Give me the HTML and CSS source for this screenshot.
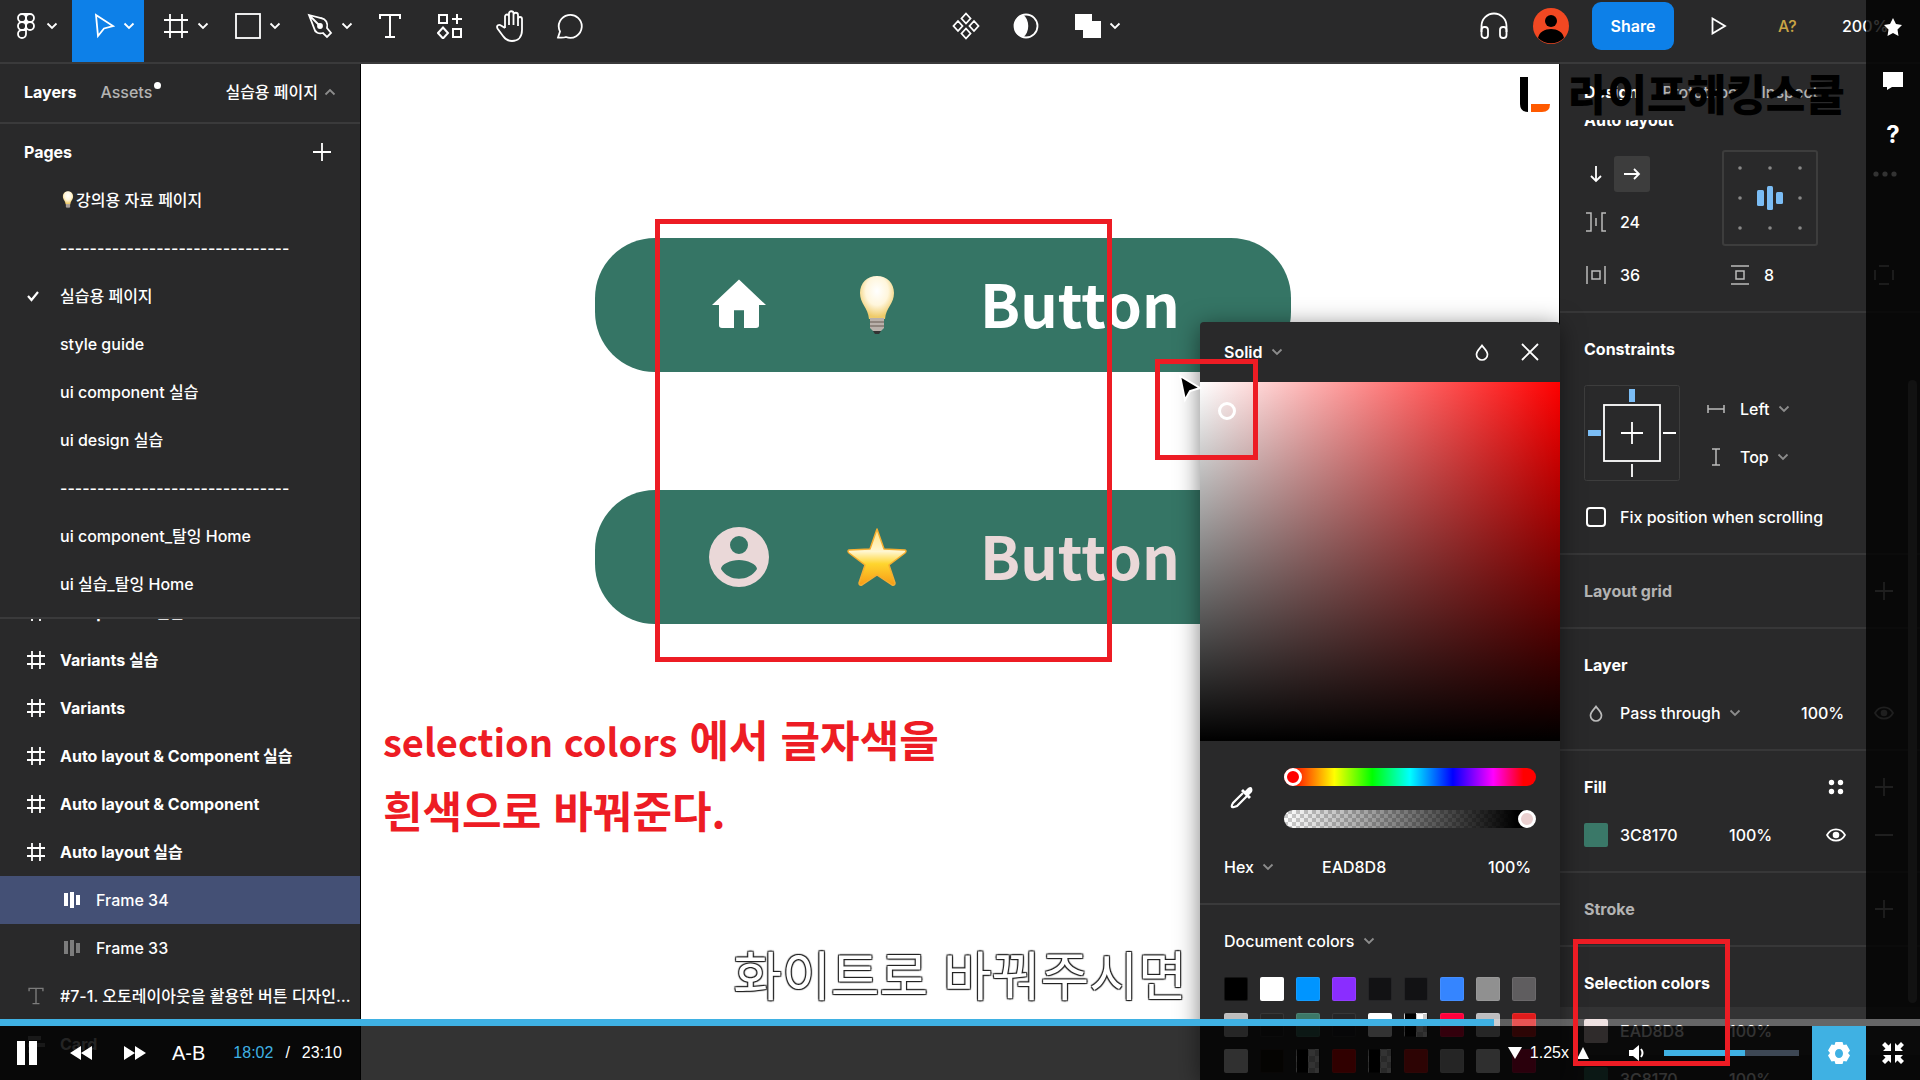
FILE: index.html
```html
<!DOCTYPE html>
<html lang="ko">
<head>
    <meta charset="UTF-8">
    <meta name="viewport" content="width=device-width, initial-scale=1.0">
    <title>라이프해킹스쿨</title>
    <link rel="stylesheet" href="styles.css">
</head>
<body>
    <!-- shared icons -->
    <svg class="sprite" aria-hidden="true">
        <symbol id="chevron" viewBox="0 0 12 8"><path d="M1.5 1.5L6 6l4.500-4.500" fill="none" stroke="currentColor" stroke-width="1.800"/></symbol>
        <symbol id="plus" viewBox="0 0 18 18"><path d="M9 0v18M0 9h18" stroke="currentColor" stroke-width="1.800"/></symbol>
        <symbol id="frame" viewBox="0 0 18 18"><path d="M5 0v18M13 0v18M0 5h18M0 13h18" stroke="currentColor" stroke-width="1.800"/></symbol>
        <symbol id="bars" viewBox="0 0 16 16"><path d="M0 1h4v13H0zM6 0h4v16H6zM12 3h4v10h-4z" fill="currentColor"/></symbol>
        <symbol id="text" viewBox="0 0 24 26"><path d="M2 6V2h20v4M12 2v22M7 24h10" fill="none" stroke="currentColor" stroke-width="2"/></symbol>
        <symbol id="drop" viewBox="0 0 14 17"><path d="M7 1.500C9 4.500 12.500 7 12.500 10.500a5.500 5.500 0 0 1-11 0C1.500 7 5 4.500 7 1.500z" fill="none" stroke="currentColor" stroke-width="1.700"/></symbol>
        <symbol id="eye" viewBox="0 0 20 14"><path d="M1 7c4-7.500 14-7.500 18 0-4 7.500-14 7.500-18 0z" fill="none" stroke="currentColor" stroke-width="1.700"/><circle cx="10" cy="7" r="3.300" fill="currentColor"/></symbol>
        <symbol id="bulb" viewBox="0 0 36 60">
            <radialGradient id="glass" cx=".5" cy=".35" r=".6"><stop offset="0" stop-color="#fff"/><stop offset=".55" stop-color="#fff6dc"/><stop offset="1" stop-color="#efcb6a"/></radialGradient>
            <path d="M18 1c10 0 17 7 17 17 0 11-8 14-9 26H10C9 32 1 29 1 18 1 8 8 1 18 1z" fill="url(#glass)"/>
            <path d="M11 43h14v10l-3 3h-8l-3-3z" fill="#b9b0aa"/><path d="M11 47h14M11 51h14" stroke="#81766f" stroke-width="1.500"/><path d="M14 56h8l-2 3h-4z" fill="#333"/>
        </symbol>
    </svg>

    <div class="app">
        <header class="toolbar">
            <div class="tools">
                <button class="tool wide menu" aria-label="Menu">
                    <svg width="20" height="26" viewBox="0 0 20 26" fill="none" stroke="currentColor" stroke-width="1.800"><rect x="2" y="1" width="8" height="8" rx="4"/><rect x="10" y="1" width="8" height="8" rx="4"/><rect x="2" y="9" width="8" height="8" rx="4"/><circle cx="14" cy="13" r="4"/><path d="M10 1v20a4 4 0 1 1-4-4h4M6 1h8M6 9h8"/></svg>
                    <svg class="chev"><use href="#chevron"/></svg>
                </button>
                <button class="tool wide active" aria-label="Move">
                    <svg width="22" height="26" viewBox="0 0 22 26" fill="none" stroke="currentColor" stroke-width="1.800"><path d="M3 2l17 11-9 2.500L5 23z"/></svg>
                    <svg class="chev"><use href="#chevron"/></svg>
                </button>
                <button class="tool wide" aria-label="Frame">
                    <svg width="26" height="26" viewBox="0 0 26 26" stroke="currentColor" stroke-width="1.800"><path d="M7 1v24M19 1v24M1 7h24M1 19h24"/></svg>
                    <svg class="chev"><use href="#chevron"/></svg>
                </button>
                <button class="tool wide" aria-label="Rectangle">
                    <svg width="26" height="26" viewBox="0 0 26 26" fill="none" stroke="currentColor" stroke-width="1.800"><rect x="1" y="1" width="24" height="24"/></svg>
                    <svg class="chev"><use href="#chevron"/></svg>
                </button>
                <button class="tool wide" aria-label="Pen">
                    <svg width="26" height="26" viewBox="0 0 26 26" fill="none" stroke="currentColor" stroke-width="1.800"><path d="M2 2l12 3c5 1 7 5 6 10l4 5-4 4-4-4c-4 1-8 0-9-5zM2 2l10 10"/><circle cx="13" cy="13" r="2" fill="currentColor"/></svg>
                    <svg class="chev"><use href="#chevron"/></svg>
                </button>
                <button class="tool" aria-label="Text"><svg width="24" height="26"><use href="#text"/></svg></button>
                <button class="tool" aria-label="Resources">
                    <svg width="26" height="26" viewBox="0 0 26 26" fill="none" stroke="currentColor" stroke-width="2"><rect x="2" y="2" width="8" height="8"/><rect x="16" y="16" width="8" height="8"/><path d="M20 1v10M15 6h10M6 14.500L11 20l-5 5.500L1 20z"/></svg>
                </button>
                <button class="tool" aria-label="Hand">
                    <svg width="28" height="32" viewBox="0 0 28 32" fill="none" stroke="currentColor" stroke-width="1.800"><path d="M9 18V6.500a2 2 0 0 1 4 0V15 3.500a2 2 0 0 1 4.500 0V15 5a2 2 0 0 1 4.500 0v11-7a2 2 0 0 1 4 0v11c0 7-4 11-10 11-5 0-7-2-9-5l-5.500-7.500c-1.500-3 1.500-4.500 3.500-3L9 18"/></svg>
                </button>
                <button class="tool" aria-label="Comment">
                    <svg width="28" height="26" viewBox="0 0 28 26" fill="none" stroke="currentColor" stroke-width="1.800"><path d="M2 24.500l2-6A11.500 11.500 0 1 1 10 24c-2 .8-5 .8-8 .5z"/></svg>
                </button>
            </div>
            <div class="tools">
                <button class="tool" aria-label="Component">
                    <svg width="28" height="28" viewBox="0 0 28 28" fill="none" stroke="currentColor" stroke-width="1.800"><path d="M14 1.500l4.500 5-4.500 5-4.500-5zM14 16.500l4.500 5-4.500 5-4.500-5zM6 9l4.500 5L6 19l-4.500-5zM22 9l4.500 5-4.500 5-4.500-5z"/></svg>
                </button>
                <button class="tool" aria-label="Mask">
                    <svg width="26" height="26" viewBox="0 0 26 26"><circle cx="13" cy="13" r="11.500" fill="none" stroke="currentColor" stroke-width="1.800"/><path d="M10 1.500c7 5 7 18 0 23C-2 21-2 5 10 1.500z" fill="currentColor"/></svg>
                </button>
                <button class="tool wide" aria-label="Union">
                    <svg width="26" height="26" viewBox="0 0 26 26"><path d="M0 1h17v7h9v17H8v-8H0z" fill="currentColor"/></svg>
                    <svg class="chev"><use href="#chevron"/></svg>
                </button>
            </div>
            <div class="tools tools-right">
                <button class="tool" aria-label="Audio">
                    <svg width="28" height="28" viewBox="0 0 28 28" fill="none" stroke="currentColor" stroke-width="1.800"><path d="M1.500 20v-6a12.500 12.500 0 0 1 25 0v6"/><rect x="1.500" y="15" width="6.500" height="11" rx="3"/><rect x="20" y="15" width="6.500" height="11" rx="3"/></svg>
                </button>
                <svg class="avatar" viewBox="0 0 36 36"><circle cx="18" cy="18" r="18" fill="#f24822"/><circle cx="18" cy="13" r="6"/><path d="M5 30c2-12 24-12 26 0-7 7-19 7-26 0z"/></svg>
                <button class="share">Share</button>
                <button class="tool play" aria-label="Present">
                    <svg width="16" height="18" viewBox="0 0 16 18" fill="none" stroke="currentColor" stroke-width="1.800"><path d="M1.500 1.500L14 9 1.500 16.500z"/></svg>
                </button>
                <span class="missing">A?</span>
                <span class="zoom">200%</span>
            </div>
        </header>

        <main class="workspace">
            <aside class="left-panel">
                <div class="left-tabs">
                    <b>Layers</b>
                    <span class="muted assets">Assets</span>
                    <span class="current-page">실습용 페이지 <svg class="chev up"><use href="#chevron"/></svg></span>
                </div>
                <div class="pages">
                    <div class="pages-head"><b>Pages</b><button class="add" aria-label="Add page"><svg width="18" height="18"><use href="#plus"/></svg></button></div>
                    <ul>
                        <li><svg class="bulb" width="14" height="18"><use href="#bulb"/></svg>강의용 자료 페이지</li>
                        <li>-------------------------------</li>
                        <li class="checked"><svg class="check" width="14" height="12" viewBox="0 0 14 12"><path d="M2 6l3.500 4L12 2" fill="none" stroke="currentColor" stroke-width="2.200"/></svg>실습용 페이지</li>
                        <li>style guide</li>
                        <li>ui component 실습</li>
                        <li>ui design 실습</li>
                        <li>-------------------------------</li>
                        <li>ui component_탈잉 Home</li>
                        <li>ui 실습_탈잉 Home</li>
                    </ul>
                </div>
                <div class="layers">
                    <ul>
                        <li class="top"><svg><use href="#frame"/></svg>Component 실습</li>
                        <li class="top"><svg><use href="#frame"/></svg>Variants 실습</li>
                        <li class="top"><svg><use href="#frame"/></svg>Variants</li>
                        <li class="top"><svg><use href="#frame"/></svg>Auto layout &amp; Component 실습</li>
                        <li class="top"><svg><use href="#frame"/></svg>Auto layout &amp; Component</li>
                        <li class="top"><svg><use href="#frame"/></svg>Auto layout 실습</li>
                        <li class="child selected"><svg><use href="#bars"/></svg>Frame 34</li>
                        <li class="child"><svg class="dim"><use href="#bars"/></svg>Frame 33</li>
                        <li><svg class="dim"><use href="#text"/></svg><span class="ellipsis">#7-1. 오토레이아웃을 활용한 버튼 디자인 실습</span></li>
                        <li class="top muted"><svg class="dim" viewBox="0 0 18 18"><path d="M1 1h13v4H1zM1 8h17v4H1zM1 15h9v3H1z" fill="currentColor"/></svg>Card</li>
                    </ul>
                </div>
            </aside>

            <section class="canvas">
                <div class="pill first">
                    <svg width="60" height="60" viewBox="0 0 60 60"><path d="M30 4L3 33h7v23q0 3 3 3h12V39h10v20h12q3 0 3-3V33h7z" transform="translate(0 1) scale(1 .88)" fill="#fff"/></svg>
                    <svg width="60" height="60"><use href="#bulb"/></svg>
                    <span>Button</span>
                </div>
                <div class="pill second">
                    <svg width="60" height="60" viewBox="0 0 60 60"><path fill-rule="evenodd" d="M30 0a30 30 0 1 1 0 60 30 30 0 0 1 0-60zm0 9a9 9 0 1 0 0 18 9 9 0 0 0 0-18zm0 24c-8 0-18 4-18 9 8 13 28 13 36 0 0-5-10-9-18-9z" fill="currentColor"/></svg>
                    <svg width="60" height="60" viewBox="0 0 60 60">
                        <linearGradient id="gold" x2="0" y2="1"><stop offset="0" stop-color="#ffe27e"/><stop offset=".4" stop-color="#fff6cf"/><stop offset=".62" stop-color="#ffd52e"/><stop offset="1" stop-color="#f79b16"/></linearGradient>
                        <path d="M30 2l7 20 21 1q2 1 0 3L42 38l6 18q0 3-3 2L30 48 15 58q-3 1-3-2l6-18L2 26q-2-2 0-3l21-1z" fill="url(#gold)" stroke="#f5ae31" stroke-width="1.500" stroke-linejoin="round"/>
                    </svg>
                    <span>Button</span>
                </div>
            </section>

            <div class="picker">
                <div class="picker-head">
                    <label class="select"><select aria-label="Paint type" class="strong"><option>Solid</option></select><svg class="chev"><use href="#chevron"/></svg></label>
                    <svg class="picker-drop" width="14" height="17"><use href="#drop"/></svg>
                    <button aria-label="Close"><svg width="18" height="18" viewBox="0 0 18 18"><path d="M1 1l16 16M17 1L1 17" stroke="currentColor" stroke-width="1.800"/></svg></button>
                </div>
                <div class="field"><i class="ring"></i></div>
                <div class="sliders">
                    <button aria-label="Eyedropper"><svg width="24" height="24" viewBox="0 0 24 24"><path d="M13 7L3 17q-3 5 1 4l3-1L17 10" fill="none" stroke="currentColor" stroke-width="2.200"/><path d="M11 5l2-2 2 2 3-3q3-2 4 0t0 4l-3 3 2 2-2 2z" fill="currentColor"/></svg></button>
                    <div class="tracks">
                        <input type="range" class="hue" min="0" max="360" value="0" aria-label="Hue">
                        <input type="range" class="alpha" min="0" max="100" value="100" aria-label="Opacity">
                    </div>
                </div>
                <div class="hex">
                    <label class="select"><select aria-label="Color format"><option>Hex</option></select><svg class="chev"><use href="#chevron"/></svg></label>
                    <input type="text" class="hex-value" value="EAD8D8" aria-label="Hex value">
                    <input type="text" class="percent" value="100%" aria-label="Alpha">
                </div>
                <div class="document-colors">
                    <label class="select"><select aria-label="Library"><option>Document colors</option></select><svg class="chev"><use href="#chevron"/></svg></label>
                    <div class="swatches">
                        <i style="background:#000"></i><i style="background:#fff"></i><i style="background:#0095ff"></i><i style="background:#8a2dff"></i><i style="background:#121214"></i><i style="background:#121214"></i><i style="background:#3585ff"></i><i style="background:#909090"></i><i style="background:#5f5d5f"></i>
                        <i style="background:#bdbdbd"></i><i style="background:#262626"></i><i style="background:#3c7868"></i><i style="background:#262628"></i><i style="background:#fff"></i><i class="half"></i><i style="background:#ff003c"></i><i style="background:#bdbdbf"></i><i style="background:#e01b1b"></i>
                        <i style="background:#eee"></i><i style="background:#1c140c"></i><i class="half"></i><i style="background:#f00000"></i><i class="half"></i><i style="background:#e11414"></i><i style="background:#bbb"></i><i style="background:#e8e8e8"></i><i style="background:#d0003c"></i>
                    </div>
                </div>
            </div>

            <aside class="right-panel">
                <div class="right-tabs"><b>Design</b><span class="muted">Prototype</span><span class="muted">Inspect</span></div>
                <div class="properties">
                    <section class="auto-layout">
                        <h2>Auto layout</h2>
                        <div class="auto-grid">
                            <div class="direction">
                                <button aria-label="Vertical"><svg width="16" height="18" viewBox="0 0 16 18" fill="none" stroke="currentColor" stroke-width="1.800"><path d="M8 1v15M3 11l5 5 5-5"/></svg></button>
                                <button class="on" aria-label="Horizontal"><svg width="18" height="14" viewBox="0 0 18 14" fill="none" stroke="currentColor" stroke-width="1.800"><path d="M1 7h15M11 2l5 5-5 5"/></svg></button>
                            </div>
                            <svg class="align" viewBox="0 0 96 96"><rect x="1" y="1" width="94" height="94" rx="2" fill="none" stroke="#3d3d3d" stroke-width="2"/><g fill="#888"><circle cx="18" cy="18" r="1.800"/><circle cx="48" cy="18" r="1.800"/><circle cx="78" cy="18" r="1.800"/><circle cx="18" cy="48" r="1.800"/><circle cx="78" cy="48" r="1.800"/><circle cx="18" cy="78" r="1.800"/><circle cx="48" cy="78" r="1.800"/><circle cx="78" cy="78" r="1.800"/></g><g fill="#7bbdf5"><rect x="35" y="40" width="7" height="16" rx="1.500"/><rect x="45" y="36" width="6" height="24" rx="1.500"/><rect x="54" y="42" width="7" height="12" rx="1.500"/></g></svg>
                            <svg class="more" width="24" height="6" viewBox="0 0 24 6" fill="#fff"><circle cx="3" cy="3" r="2.600"/><circle cx="12" cy="3" r="2.600"/><circle cx="21" cy="3" r="2.600"/></svg>
                            <label class="value spacing"><svg viewBox="0 0 20 20" fill="none" stroke="currentColor" stroke-width="1.500"><path d="M0 1h5v18H0M20 1h-4v18h4M10 6v8"/></svg><input type="text" value="24" aria-label="Spacing"></label>
                            <label class="value pad-x"><svg viewBox="0 0 20 20" fill="none" stroke="currentColor" stroke-width="1.500"><path d="M1 1v18M19 1v18M6 6h8v8H6z"/></svg><input type="text" value="36" aria-label="Horizontal padding"></label>
                            <label class="value pad-y"><svg viewBox="0 0 20 20" fill="none" stroke="currentColor" stroke-width="1.500"><path d="M1 1h18M1 19h18M6 6h8v8H6z"/></svg><input type="text" value="8" aria-label="Vertical padding"></label>
                            <svg class="corners" width="20" height="20" viewBox="0 0 20 20" stroke="#aaa" stroke-width="1.500"><path d="M5 1h10M5 19h10M1 5v10M19 5v10"/></svg>
                        </div>
                    </section>
                    <section>
                        <h2>Constraints</h2>
                        <div class="constraints">
                            <svg width="96" height="96" viewBox="0 0 96 96" fill="none"><rect x=".5" y=".5" width="95" height="95" rx="2" stroke="#3d3d3d"/><rect x="20" y="20" width="56" height="56" stroke="#fff" stroke-width="1.800"/><path d="M48 37v22M37 48h22M79 48h13M48 79v13" stroke="#fff" stroke-width="1.800"/><path d="M45 4h6v13h-6zM4 45h13v6H4z" fill="#7bbdf5"/></svg>
                            <div>
                                <label class="select"><svg class="axis" viewBox="0 0 18 18"><path d="M1 5v8M17 5v8M1 9h16" stroke="currentColor" stroke-width="1.500"/></svg><select aria-label="Horizontal constraint"><option>Left</option></select><svg class="chev"><use href="#chevron"/></svg></label>
                                <label class="select"><svg class="axis" viewBox="0 0 18 18"><path d="M5 1h8M5 17h8M9 1v16" stroke="currentColor" stroke-width="1.500"/></svg><select aria-label="Vertical constraint"><option>Top</option></select><svg class="chev"><use href="#chevron"/></svg></label>
                            </div>
                        </div>
                        <label class="row check-row"><input type="checkbox">Fix position when scrolling</label>
                    </section>
                    <section>
                        <h2 class="muted">Layout grid<button class="edge" aria-label="Add grid"><svg width="18" height="18"><use href="#plus"/></svg></button></h2>
                    </section>
                    <section>
                        <h2>Layer</h2>
                        <div class="row">
                            <svg class="lead" viewBox="0 0 14 17"><use href="#drop"/></svg>
                            <label class="select"><select aria-label="Blend mode"><option>Pass through</option></select><svg class="chev"><use href="#chevron"/></svg></label>
                            <input type="text" class="percent layer-percent" value="100%" aria-label="Layer opacity">
                            <button class="edge" aria-label="Toggle layer"><svg width="20" height="14"><use href="#eye"/></svg></button>
                        </div>
                    </section>
                    <section>
                        <h2>Fill<button class="inner" aria-label="Styles"><svg width="16" height="16" viewBox="0 0 16 16" fill="currentColor"><circle cx="3.500" cy="3.500" r="2.700"/><circle cx="12.500" cy="3.500" r="2.700"/><circle cx="3.500" cy="12.500" r="2.700"/><circle cx="12.500" cy="12.500" r="2.700"/></svg></button><button class="edge" aria-label="Add fill"><svg width="18" height="18"><use href="#plus"/></svg></button></h2>
                        <div class="row">
                            <i class="chip green"></i>
                            <input type="text" class="color-value" value="3C8170" aria-label="Fill color">
                            <input type="text" class="percent" value="100%" aria-label="Fill opacity">
                            <button class="inner" aria-label="Toggle fill"><svg width="20" height="14"><use href="#eye"/></svg></button>
                            <button class="edge" aria-label="Remove fill"><svg width="18" height="2"><path d="M0 1h18" stroke="currentColor" stroke-width="2"/></svg></button>
                        </div>
                    </section>
                    <section>
                        <h2 class="muted">Stroke<button class="edge" aria-label="Add stroke"><svg width="18" height="18"><use href="#plus"/></svg></button></h2>
                    </section>
                    <section>
                        <h2>Selection colors</h2>
                        <div class="row hover">
                            <i class="chip pink"></i>
                            <input type="text" class="color-value" value="EAD8D8" aria-label="Selection color 1">
                            <input type="text" class="percent" value="100%" aria-label="Selection opacity 1">
                        </div>
                        <div class="row">
                            <i class="chip green"></i>
                            <input type="text" class="color-value" value="3C8170" aria-label="Selection color 2">
                            <input type="text" class="percent" value="100%" aria-label="Selection opacity 2">
                        </div>
                    </section>
                </div>
                <i class="scrollbar"></i>
            </aside>
        </main>
    </div>

    <!-- lecture overlays -->
    <div class="brand">
        <svg width="30" height="36" viewBox="0 0 30 36"><path d="M0 0h8v35Q0 35 0 27z"/><path d="M11 27h19q0 8-8 8H11z" fill="#ff5a00"/></svg>
        <span>라이프해킹스쿨</span>
    </div>
    <p class="note"><span>selection colors</span> 에서 글자색을<br>흰색으로 바꿔준다.</p>
    <p class="subtitle">화이트로 바꿔주시면</p>
    <svg class="pointer" width="24" height="30" viewBox="0 0 24 30"><path d="M2 2l20 12-10 3-5 9z" stroke="#fff" stroke-width="2"/></svg>

    <nav class="side-bar">
        <button aria-label="Favorite"><svg width="20" height="20" viewBox="0 0 20 20"><path d="M10 1l3 6 6 1-4.500 4.500 1 6.500L10 16l-5.500 3 1-6.500L1 8l6-1z" fill="currentColor"/></svg></button>
        <button aria-label="Chat"><svg width="20" height="20" viewBox="0 0 20 20"><path d="M0 1h20v15H9l-5 3v-3H0z" fill="currentColor"/></svg></button>
        <button class="help">?</button>
    </nav>

    <footer class="player">
        <input type="range" class="progress" min="0" max="1390" value="1082" aria-label="Seek" style="--played:77.8%">
        <div class="controls">
            <button class="pause" aria-label="Pause"><svg width="20" height="24" viewBox="0 0 20 24"><path d="M0 0h8v24H0zM12 0h8v24h-8z" fill="currentColor"/></svg></button>
            <button class="rewind" aria-label="Rewind"><svg width="22" height="14" viewBox="0 0 22 14"><path d="M0 7l11-7v14zM11 7l11-7v14z" fill="currentColor"/></svg></button>
            <button class="forward" aria-label="Forward"><svg width="22" height="14" viewBox="0 0 22 14"><path d="M0 0l11 7-11 7zM11 0l11 7-11 7z" fill="currentColor"/></svg></button>
            <button class="repeat">A-B</button>
            <span class="time"><em>18:02</em><span>/</span><span>23:10</span></span>
            <div class="speed">
                <button aria-label="Slower"><svg width="14" height="12" viewBox="0 0 14 12"><path d="M0 0h14L7 12z" fill="currentColor"/></svg></button>
                <span>1.25x</span>
                <button aria-label="Faster"><svg width="12" height="12" viewBox="0 0 12 12"><path d="M0 12h12L6 0z" fill="currentColor"/></svg></button>
            </div>
            <button class="mute" aria-label="Mute"><svg width="16" height="16" viewBox="0 0 16 16"><path d="M0 5h4l6-5v16l-6-5H0z" fill="currentColor"/><path d="M12 4q3 4 0 8" fill="none" stroke="currentColor" stroke-width="2"/></svg></button>
            <input type="range" class="volume" min="0" max="100" value="60" aria-label="Volume" style="--level:60%">
            <button class="settings" aria-label="Settings"><svg width="24" height="24" viewBox="0 0 24 24"><path fill-rule="evenodd" d="M8.500 1h7l1 3 3-.5L23 9.500 21 12l2 2.500-3.500 6-3-.5-1 3h-7l-1-3-3 .5L1 14.500 3 12 1 9.500l3.500-6 3 .5zM12 8a4 4.500 0 1 0 0 9 4 4.500 0 0 0 0-9z" fill="currentColor"/></svg></button>
            <button class="shrink" aria-label="Exit full screen"><svg width="22" height="22" viewBox="0 0 22 22"><path d="M9 1v8H1l2.500-2.500L0 3l3-3 3.500 3.500zM13 1v8h8l-2.500-2.500L22 3l-3-3-3.500 3.500zM9 21v-8H1l2.500 2.500L0 19l3 3 3.500-3.500zM13 21v-8h8l-2.500 2.500L22 19l-3 3-3.500-3.500z" fill="currentColor"/></svg></button>
        </div>
    </footer>

    <i class="mark mark-buttons"></i>
    <i class="mark mark-cursor"></i>
    <i class="mark mark-colors"></i>
</body>
</html>
```
FILE: styles.css
```css
* {
    box-sizing: border-box;
}
body {
    margin: 0;
    height: 100vh;
    overflow: hidden;
    position: relative;
    background: #29292a;
    color: #fff;
    font: 500 16px/24px Inter, "Noto Sans CJK KR", sans-serif;
}
ul, h2, p {
    margin: 0;
    padding: 0;
    list-style: none;
}
b, h2 {
    font-size: 16px;
    font-weight: 700;
}
svg {
    flex: none;
    display: block;
}
button {
    display: flex;
    align-items: center;
    justify-content: center;
    padding: 0;
    border: 0;
    background: none;
    color: inherit;
    font: inherit;
}
select, input[type="text"] {
    appearance: none;
    border: 0;
    padding: 0;
    margin: 0;
    background: none;
    color: inherit;
    font: inherit;
    min-width: 0;
}
input {
    margin: 0;
}
.sprite {
    position: absolute;
    width: 0;
    height: 0;
}
.muted {
    color: #b3b3b3;
}
.chev {
    width: 12px;
    height: 8px;
    color: #8c8c8c;
}
.up {
    transform: rotate(180deg);
}
.select {
    display: flex;
    align-items: center;
    gap: 8px;
    height: 48px;
}
.picker .strong {
    font-weight: 600;
}

/* toolbar */
.app {
    display: flex;
    flex-direction: column;
    height: 100vh;
}
.toolbar {
    display: flex;
    justify-content: space-between;
    height: 64px;
    border-bottom: 2px solid #3a3a3b;
}
.tools {
    display: flex;
}
.tool {
    width: 60px;
    padding-bottom: 10px;
}
.tool.wide {
    width: 72px;
    gap: 8px;
    padding-left: 12px;
}
.tool.menu {
    gap: 10px;
    padding-left: 2px;
}
.tool .chev {
    color: #fff;
}
.tool.active {
    background: #0d80e8;
}
.tools-right {
    width: 456px;
    height: 52px;
    align-items: center;
}
.tools-right .tool {
    padding: 0;
}
.avatar {
    width: 36px;
    height: 36px;
    margin: 0 23px 0 9px;
}
.share {
    width: 82px;
    height: 48px;
    border-radius: 9px;
    background: #0d80e8;
    font-weight: 600;
}
.play {
    margin: 0 29px 0 15px;
}
.missing {
    width: 64px;
    color: #c9a545;
}

/* left panel */
.workspace {
    flex: 1;
    min-height: 0;
    display: flex;
    position: relative;
    overflow: hidden;
}
.left-panel {
    width: 361px;
    border-right: 1px solid #000;
    display: flex;
    flex-direction: column;
}
.left-tabs {
    display: flex;
    align-items: center;
    height: 60px;
    padding: 0 24px 2px;
    gap: 24px;
    border-bottom: 2px solid #3a3a3b;
}
.assets {
    position: relative;
}
.assets::after {
    content: "";
    position: absolute;
    top: 2px;
    right: -9px;
    width: 7px;
    height: 7px;
    border-radius: 50%;
    background: #fff;
}
.current-page {
    display: flex;
    align-items: center;
    gap: 6px;
    margin-left: auto;
}
.pages {
    padding-bottom: 9px;
    border-bottom: 2px solid #3a3a3b;
}
.pages-head {
    display: flex;
    align-items: center;
    justify-content: space-between;
    height: 52px;
    padding: 4px 29px 0 24px;
}
.pages li {
    display: flex;
    align-items: center;
    height: 48px;
    padding-left: 60px;
}
.pages .bulb {
    margin: 0 1px;
}
.pages .check {
    margin: 0 20px 0 -34px;
}
.layers {
    flex: 1;
    min-height: 0;
    overflow: hidden;
}
.layers ul {
    margin-top: -31px;
}
.layers li {
    display: flex;
    align-items: center;
    gap: 15px;
    height: 48px;
    padding: 0 8px 0 27px;
}
.layers svg {
    width: 18px;
    height: 18px;
}
.layers .top {
    font-weight: 700;
}
.layers .child {
    padding-left: 64px;
    gap: 16px;
}
.layers .child svg {
    width: 16px;
    height: 16px;
}
.selected {
    background: #445075;
}
.dim {
    color: #7c7c7c;
}
.ellipsis {
    overflow: hidden;
    text-overflow: ellipsis;
    white-space: nowrap;
}

/* canvas */
.canvas {
    flex: 1;
    position: relative;
    background: #fff;
}
.pill {
    position: absolute;
    left: 234px;
    display: flex;
    align-items: center;
    gap: 78px;
    width: 696px;
    height: 134px;
    padding-left: 114px;
    border-radius: 60px;
    background: #357565;
    font: 700 59px/72px "Noto Sans CJK KR", sans-serif;
}
.pill span {
    margin: -4px 0 0 -5px;
}
.first {
    top: 174px;
}
.second {
    top: 426px;
    color: #ead8d8;
}

/* color picker */
.picker {
    position: absolute;
    top: 258px;
    bottom: 0;
    right: 360px;
    z-index: 2;
    width: 360px;
    overflow: hidden;
    border-radius: 4px 4px 0 0;
    background: #29292a;
    box-shadow: 0 4px 24px rgba(0, 0, 0, .5);
}
.picker-head {
    display: flex;
    align-items: center;
    height: 60px;
    padding: 0 21px 0 24px;
}
.picker-drop {
    margin: 0 32px 0 auto;
}
.field {
    position: relative;
    height: 359px;
    background: linear-gradient(to top, #000, transparent), linear-gradient(to right, #fff, #f00);
}
.ring {
    position: absolute;
    left: 18px;
    top: 20px;
    width: 18px;
    height: 18px;
    border: 3px solid #fff;
    border-radius: 50%;
}
.sliders {
    display: flex;
    align-items: center;
    gap: 30px;
    padding: 27px 24px 12px 30px;
}
.tracks {
    flex: 1;
    display: grid;
    gap: 24px;
}
.tracks input {
    appearance: none;
    width: 100%;
    height: 18px;
    border-radius: 9px;
}
.hue {
    background: linear-gradient(to right, #f00 3%, #ff0 20%, #0f0 35%, #0ff 50%, #00f 67%, #f0f 83%, #f00 95%);
}
.alpha {
    background: linear-gradient(to right, transparent, #000 92%), conic-gradient(#ccc 25%, #fff 0 50%, #ccc 0 75%, #fff 0) 0 0 / 8px 8px;
}
.tracks input::-webkit-slider-thumb {
    appearance: none;
    width: 18px;
    height: 18px;
    border: 3px solid #fff;
    border-radius: 50%;
    background: #f00;
}
.tracks .alpha::-webkit-slider-thumb {
    background: #ead0d0;
}
.hex {
    display: flex;
    align-items: center;
    height: 53px;
    padding: 0 24px;
    margin-bottom: 10px;
}
.hex .select {
    width: 98px;
}
.hex-value {
    width: 166px;
}
.percent {
    width: 48px;
}
.document-colors {
    padding: 12px 24px;
    border-top: 2px solid #3a3a3b;
}
.swatches {
    display: grid;
    grid-template-columns: repeat(9, 24px);
    gap: 12px;
    padding-top: 12px;
}
.swatches i {
    height: 24px;
    border: 1px solid rgba(255, 255, 255, .08);
    border-radius: 2px;
}
.half {
    background: linear-gradient(to right, #000 50%, transparent 50%), conic-gradient(#ccc 25%, #fff 0 50%, #ccc 0 75%, #fff 0) 0 0 / 12px 12px;
}

/* right panel */
.right-panel {
    position: relative;
    width: 361px;
    display: flex;
    flex-direction: column;
    border-left: 1px solid #000;
}
.right-tabs {
    display: flex;
    align-items: center;
    gap: 24px;
    height: 56px;
    padding-left: 24px;
}
.properties {
    flex: 1;
    min-height: 0;
    overflow: hidden;
}
.properties section {
    padding: 12px 0;
    border-bottom: 2px solid #373738;
}
.properties h2, .row {
    position: relative;
    display: flex;
    align-items: center;
    height: 48px;
    padding-left: 24px;
}
.properties .auto-layout {
    padding: 0 0 7px;
}
.auto-layout h2 {
    margin-top: -24px;
}
.auto-grid {
    display: grid;
    grid-template-columns: 138px 136px 1fr;
    grid-template-rows: 48px 48px 58px;
    align-items: center;
    padding: 6px 0 0 24px;
}
.direction {
    display: flex;
}
.direction button {
    width: 36px;
    height: 36px;
    border-radius: 3px;
}
.direction button:first-child {
    margin-left: -6px;
}
.direction .on {
    background: #3d3d3d;
}
.align {
    grid-row: 1 / 3;
    grid-column: 2;
    align-self: start;
    width: 96px;
    height: 96px;
}
.more {
    margin-left: 15px;
}
.value {
    display: flex;
    align-items: center;
    gap: 14px;
    padding-left: 2px;
}
.value svg {
    width: 20px;
    height: 20px;
    color: #bbb;
}
.value input {
    width: 40px;
}
.spacing {
    grid-column: 1;
    grid-row: 2;
}
.pad-x {
    grid-column: 1;
    grid-row: 3;
}
.pad-y {
    grid-column: 2;
    grid-row: 3;
    padding-left: 8px;
}
.corners {
    grid-column: 3;
    grid-row: 3;
    margin-left: 16px;
}
.constraints {
    display: flex;
    gap: 27px;
    padding: 12px 0 12px 24px;
}
.axis {
    width: 18px;
    height: 18px;
    margin-right: 7px;
    color: #bbb;
}
.check-row input {
    appearance: none;
    width: 20px;
    height: 20px;
    margin: 0 14px 0 2px;
    border: 2px solid #fff;
    border-radius: 4px;
}
.lead {
    width: 14px;
    height: 17px;
    margin: 0 17px 0 5px;
    color: #bbb;
}
.edge {
    position: absolute;
    right: 24px;
    width: 24px;
    height: 24px;
    color: #999;
}
.inner {
    position: absolute;
    right: 72px;
    width: 24px;
    height: 24px;
}
.layer-percent {
    position: absolute;
    right: 71px;
}
.chip {
    width: 24px;
    height: 24px;
    margin-right: 12px;
    border-radius: 2px;
}
.green {
    background: #3a7868;
}
.pink {
    background: #ead8d8;
}
.color-value {
    width: 109px;
}
.hover {
    background: #333334;
}
.scrollbar {
    position: absolute;
    top: 316px;
    bottom: 77px;
    right: 3px;
    width: 9px;
    border-radius: 5px;
    background: #5a5a5a;
}

/* lecture overlays */
.brand {
    position: absolute;
    z-index: 3;
    top: 77px;
    left: 1520px;
    display: flex;
    gap: 18px;
    color: #000;
    font: 900 43px/30px "Noto Sans CJK KR", sans-serif;
}
.note {
    position: absolute;
    z-index: 3;
    left: 383px;
    top: 704px;
    color: #ed1c24;
    font: 700 43px/68px "Noto Sans CJK KR", sans-serif;
}
.note span {
    font-size: 38px;
}
.subtitle {
    position: absolute;
    z-index: 4;
    left: 0;
    right: 0;
    bottom: 71px;
    text-align: center;
    font: 400 53px/72px "Noto Sans CJK KR", sans-serif;
    text-shadow: 1px 1px 1px #222, -1px -1px 1px #222, 1px -1px 1px #222, -1px 1px 1px #222;
}
.pointer {
    position: absolute;
    z-index: 4;
    left: 1178px;
    top: 374px;
}
.mark {
    position: absolute;
    z-index: 6;
    border: 5px solid #ed1c24;
}
.mark-buttons {
    left: 655px;
    top: 219px;
    width: 457px;
    height: 443px;
}
.mark-cursor {
    left: 1155px;
    top: 359px;
    width: 103px;
    height: 101px;
}
.mark-colors {
    left: 1573px;
    top: 939px;
    width: 157px;
    height: 127px;
}
.side-bar {
    position: absolute;
    z-index: 4;
    top: 0;
    right: 0;
    bottom: 61px;
    width: 54px;
    background: rgba(0, 0, 0, .8);
}
.side-bar button {
    width: 54px;
    height: 54px;
}
.side-bar .help {
    font: 700 24px/54px Inter, sans-serif;
}

/* player */
.player {
    position: absolute;
    z-index: 5;
    left: 0;
    right: 0;
    bottom: 0;
    font: 16px/24px "Liberation Sans", Arial, sans-serif;
}
.progress {
    appearance: none;
    display: block;
    width: 100%;
    height: 7px;
    background: linear-gradient(to right, #3fb1e3 var(--played), rgba(255, 255, 255, .25) var(--played));
}
.progress::-webkit-slider-thumb, .volume::-webkit-slider-thumb {
    appearance: none;
    width: 0;
    height: 0;
}
.controls {
    display: flex;
    align-items: center;
    height: 54px;
    padding-left: 17px;
    background: rgba(0, 0, 0, .8);
}
.rewind {
    margin: 0 32px 0 33px;
}
.repeat {
    margin: 0 28px 0 26px;
    font-size: 20px;
}
.time {
    display: flex;
    gap: 12px;
}
.time em {
    font-style: normal;
    color: #3fb1e3;
}
.speed {
    display: flex;
    align-items: center;
    gap: 8px;
    margin-left: auto;
}
.mute {
    margin: 0 19px 0 40px;
}
.volume {
    appearance: none;
    width: 135px;
    height: 6px;
    margin-right: 13px;
    background: linear-gradient(to right, #3fb1e3 var(--level), #3d4754 var(--level));
}
.settings, .shrink {
    width: 54px;
    height: 54px;
}
.settings {
    background: #3fb1e3;
}
```
